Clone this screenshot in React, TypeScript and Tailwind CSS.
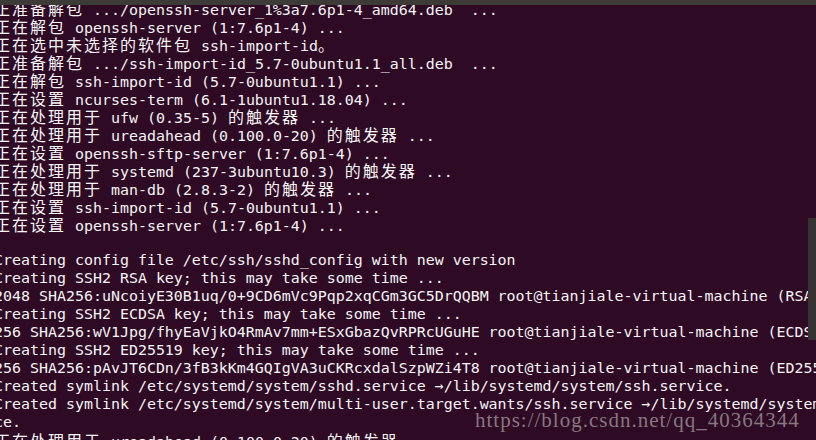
import React from "react";

const lines = [
  "正准备解包 .../openssh-server_1%3a7.6p1-4_amd64.deb  ...",
  "正在解包 openssh-server (1:7.6p1-4) ...",
  "正在选中未选择的软件包 ssh-import-id。",
  "正准备解包 .../ssh-import-id_5.7-0ubuntu1.1_all.deb  ...",
  "正在解包 ssh-import-id (5.7-0ubuntu1.1) ...",
  "正在设置 ncurses-term (6.1-1ubuntu1.18.04) ...",
  "正在处理用于 ufw (0.35-5) 的触发器 ...",
  "正在处理用于 ureadahead (0.100.0-20) 的触发器 ...",
  "正在设置 openssh-sftp-server (1:7.6p1-4) ...",
  "正在处理用于 systemd (237-3ubuntu10.3) 的触发器 ...",
  "正在处理用于 man-db (2.8.3-2) 的触发器 ...",
  "正在设置 ssh-import-id (5.7-0ubuntu1.1) ...",
  "正在设置 openssh-server (1:7.6p1-4) ...",
  "",
  "Creating config file /etc/ssh/sshd_config with new version",
  "Creating SSH2 RSA key; this may take some time ...",
  "2048 SHA256:uNcoiyE30B1uq/0+9CD6mVc9Pqp2xqCGm3GC5DrQQBM root@tianjiale-virtual-machine (RSA)",
  "Creating SSH2 ECDSA key; this may take some time ...",
  "256 SHA256:wV1Jpg/fhyEaVjkO4RmAv7mm+ESxGbazQvRPRcUGuHE root@tianjiale-virtual-machine (ECDSA)",
  "Creating SSH2 ED25519 key; this may take some time ...",
  "256 SHA256:pAvJT6CDn/3fB3kKm4GQIgVA3uCKRcxdalSzpWZi4T8 root@tianjiale-virtual-machine (ED25519)",
  "Created symlink /etc/systemd/system/sshd.service →/lib/systemd/system/ssh.service.",
  "Created symlink /etc/systemd/system/multi-user.target.wants/ssh.service →/lib/systemd/system/ssh.servi",
  "ce.",
  "正在处理用于 ureadahead (0.100.0-20) 的触发器 ...",
];

// CJK chars take two terminal cells (18px), latin ones take one (9px)
function TermLine({ text }: { text: string }) {
  const parts = text.split(/([\u3000-\u9fff\uff00-\uffef]+)/);
  return (
    <div className="h-[18px] whitespace-pre leading-[18px]">
      {parts.map((p, i) =>
        /[\u3000-\u9fff\uff00-\uffef]/.test(p) ? (
          <span
            key={i}
            className="font-['Noto_Sans_CJK_SC',sans-serif] text-[16px] tracking-[2px]"
          >
            {p}
          </span>
        ) : (
          <span key={i}>{p}</span>
        )
      )}
      {text === "" ? " " : null}
    </div>
  );
}

export default function App() {
  return (
    <div className="relative flex h-[440px] w-[816px] flex-col overflow-hidden bg-[#2f0a24]">
      <div className="h-[5px] shrink-0 bg-[#3c3b37]" />
      <div className="flex-1 overflow-hidden">
        <div className="-ml-[6px] -mt-[6px] font-['DejaVu_Sans_Mono',monospace] text-[14.95px] text-[#f4f4f4]">
          {lines.map((l, i) => (
            <TermLine key={i} text={l} />
          ))}
        </div>
      </div>

      {/* overlay scrollbar thumb */}
      <div className="absolute right-0 top-[218px] h-[122px] w-[8px] bg-[#363232]" />

      {/* csdn watermark */}
      <div className="absolute left-[475px] top-[408px] font-['Liberation_Serif',serif] text-[21px] leading-[24px] tracking-[1px] text-[#85787f]">
        https://blog.csdn.net/qq_40364344
      </div>
    </div>
  );
}
